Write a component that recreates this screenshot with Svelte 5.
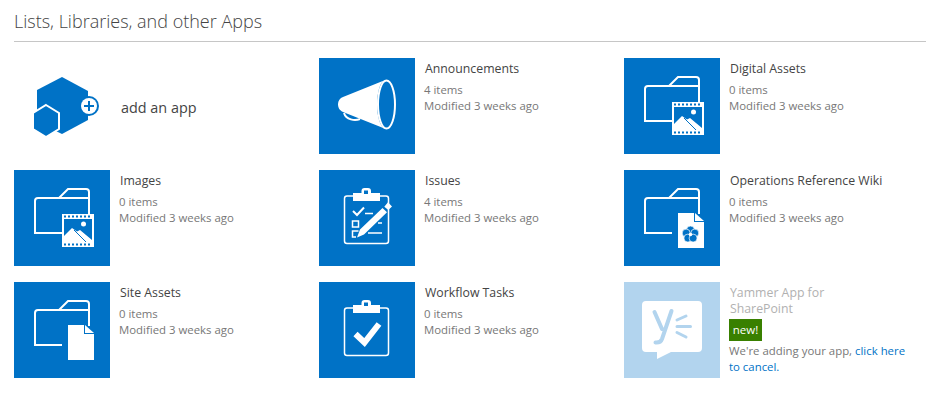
{#snippet folder()}
  <path class="line" d="M48 63H21V31a3 3 0 0 1 3-3H45L54 19H72a3 3 0 0 1 3 3V44M45 28H75" />
{/snippet}

{#snippet media()}
  {@render folder()}
  <path class="fill" fill-rule="evenodd" d="M48 44H80V77H48Z M50 45.500v2h2v-2Zm4 0v2h2v-2Zm4 0v2h2v-2Zm4 0v2h2v-2Zm4 0v2h2v-2Zm4 0v2h2v-2Zm4 0v2h2v-2Z M50 73.500v2h2v-2Zm4 0v2h2v-2Zm4 0v2h2v-2Zm4 0v2h2v-2Zm4 0v2h2v-2Zm4 0v2h2v-2Zm4 0v2h2v-2Z M50 49V72H78V49Z" />
  <circle class="fill" cx="69.500" cy="54" r="2.500" />
  <path class="fill" d="M50 72V66L58 58L63 61.500L66 60L78 70V72Z" />
  <path class="cut" d="M60 60L72 72" />
{/snippet}

{#snippet doc()}
  {@render folder()}
  <path class="fill" d="M54 43H70V52H80V78H54Z M71 43L80 51H71Z" />
{/snippet}

{#snippet clip()}
  <path class="line thin" d="M34 26H28a2.500 2.500 0 0 0-2.500 2.500V71a2.500 2.500 0 0 0 2.500 2.500H67a2.500 2.500 0 0 0 2.500-2.500V28.500A2.500 2.500 0 0 0 67 26H61" />
  <path class="fill" fill-rule="evenodd" d="M34 23H42.500V21a3 3 0 0 1 3-3H49a3 3 0 0 1 3 3V23H61V31H34Z M45 20.500V24H49V20.500Z" />
{/snippet}

<main class="page">
  <h1>Lists, Libraries, and other Apps</h1>
  <div class="grid">
    <div class="app add">
      <svg class="tile plain" viewBox="0 0 96 96" aria-hidden="true">
        <path class="blue" d="M48 19L74 33V62L48 76L23 64V32Z" />
        <path class="blue halo" d="M32 47L45 55V71L32 79L19 71V55Z" />
        <circle class="blue" cx="75" cy="48" r="10" />
        <circle class="fill" cx="75" cy="48" r="8" />
        <path class="plus" d="M70 48H80M75 43V53" />
      </svg>
      <span class="addlabel">add an app</span>
    </div>

    <div class="app">
      <svg class="tile" viewBox="0 0 96 96" aria-hidden="true">
        <path class="fill" d="M65 22.500A9 24 0 0 0 58 46.500A9 24 0 0 0 65.500 70.500L24 54C20 52 19 49 19 46C19 43 21 40 24 39Z" />
        <ellipse class="line" cx="67.500" cy="46.500" rx="8.500" ry="24" />
        <path class="line" d="M25 55C27 62 36 63 41 61" />
      </svg>
      <div class="info"><div class="name">Announcements</div><div class="meta">4 items</div><div class="meta">Modified 3 weeks ago</div></div>
    </div>

    <div class="app">
      <svg class="tile" viewBox="0 0 96 96" aria-hidden="true">{@render media()}</svg>
      <div class="info"><div class="name">Digital Assets</div><div class="meta">0 items</div><div class="meta">Modified 3 weeks ago</div></div>
    </div>

    <div class="app">
      <svg class="tile" viewBox="0 0 96 96" aria-hidden="true">{@render media()}</svg>
      <div class="info"><div class="name">Images</div><div class="meta">0 items</div><div class="meta">Modified 3 weeks ago</div></div>
    </div>

    <div class="app">
      <svg class="tile" viewBox="0 0 96 96" aria-hidden="true">
        {@render clip()}
        <path class="line" d="M34 41L38 45L45 37.500" />
        <path class="line thin" d="M46 43.500H54M59 53H63M49 63H63" />
        <rect class="line thin" x="33.500" y="51" width="6" height="6" />
        <path class="line thin" d="M39.500 61H33.500V67H37" />
        <path class="fill" d="M63.500 38L68 42.300L45 64.500L38 67.500L41 59.500ZM69 32.300L73 36.500L69.300 40L65.300 36.700Z" />
      </svg>
      <div class="info"><div class="name">Issues</div><div class="meta">4 items</div><div class="meta">Modified 3 weeks ago</div></div>
    </div>

    <div class="app">
      <svg class="tile" viewBox="0 0 96 96" aria-hidden="true">
        {@render doc()}
        <g class="petal">
          <circle cx="66.500" cy="60" r="4" />
          <circle cx="62.200" cy="63.100" r="4" />
          <circle cx="70.800" cy="63.100" r="4" />
          <circle cx="63.900" cy="68.100" r="4" />
          <circle cx="69.100" cy="68.100" r="4" />
        </g>
        <circle class="fill" cx="66.500" cy="64.500" r="1.800" />
      </svg>
      <div class="info"><div class="name">Operations Reference Wiki</div><div class="meta">0 items</div><div class="meta">Modified 3 weeks ago</div></div>
    </div>

    <div class="app">
      <svg class="tile" viewBox="0 0 96 96" aria-hidden="true">{@render doc()}</svg>
      <div class="info"><div class="name">Site Assets</div><div class="meta">0 items</div><div class="meta">Modified 3 weeks ago</div></div>
    </div>

    <div class="app">
      <svg class="tile" viewBox="0 0 96 96" aria-hidden="true">
        {@render clip()}
        <path class="check" d="M36.500 52L45.500 60.500L60 42" />
      </svg>
      <div class="info"><div class="name">Workflow Tasks</div><div class="meta">0 items</div><div class="meta">Modified 3 weeks ago</div></div>
    </div>

    <div class="app">
      <svg class="tile pale" viewBox="0 0 96 96" aria-hidden="true">
        <path class="fill" d="M22 19H74a4 4 0 0 1 4 4V66a4 4 0 0 1-4 4H47L33 77V70H22a4 4 0 0 1-4-4V23a4 4 0 0 1 4-4Z" />
        <path class="yam" d="M30.500 30L38 47M47.500 29L38 57Q36.500 61 31.500 60.500" />
        <path class="yam thinner" d="M53 38L62 34M53 44.500H66.500M53 50.500L62 55" />
      </svg>
      <div class="info">
        <div class="name faded">Yammer App for SharePoint</div>
        <div class="badge">new!</div>
        <div class="meta notice">We're adding your app, <a href="#cancel">click here to cancel.</a></div>
      </div>
    </div>
  </div>
</main>

<style>
  :global(body) {
    margin: 0;
    background: #fff;
  }
  .page {
    width: 926px;
    height: 417px;
    box-sizing: border-box;
    padding: 0 0 0 14px;
    font-family: "Open Sans", "Noto Sans", sans-serif;
    overflow: hidden;
  }
  h1 {
    margin: 0;
    height: 41px;
    border-bottom: 1px solid #c6c6c6;
    font-size: 18px;
    font-weight: 300;
    line-height: 42px;
    color: #444;
  }
  .grid {
    display: grid;
    grid-template-columns: repeat(3, 305px);
    grid-auto-rows: 112px;
    padding-top: 16px;
  }
  .app {
    display: flex;
    gap: 9px;
    align-items: flex-start;
    min-width: 0;
  }
  .tile {
    flex: none;
    width: 96px;
    height: 96px;
    background: #0072c6;
  }
  .tile.plain { background: none; }
  .tile.pale { background: #b2d4ee; }
  .fill { fill: #fff; }
  .blue { fill: #0072c6; }
  .petal { fill: #0072c6; stroke: #fff; stroke-width: 0.700; }
  .halo { stroke: #fff; stroke-width: 2; }
  .plus { stroke: #0072c6; stroke-width: 2; fill: none; }
  .line { fill: none; stroke: #fff; stroke-width: 2; }
  .thin { stroke-width: 1.500; }
  .cut { fill: none; stroke: #0072c6; stroke-width: 1; }
  .check { fill: none; stroke: #fff; stroke-width: 6; }
  .yam { fill: none; stroke: #b2d4ee; stroke-width: 4; stroke-linecap: round; }
  .thinner { stroke-width: 3; }
  .add { align-items: center; height: 96px; gap: 11px; }
  .addlabel { font-size: 14.400px; color: #444; line-height: 20px; padding-top: 4px; }
  .info {
    width: 180px;
    padding-top: 3px;
    font-size: 11.400px;
    line-height: 16px;
  }
  .name {
    font-size: 12.300px;
    color: #444;
    padding-left: 1px;
    margin-bottom: 5px;
  }
  .name.faded { color: #b1b1b1; margin-bottom: 2px; max-width: 125px; }
  .meta { color: #777; }
  .badge {
    width: 33px;
    height: 22px;
    line-height: 22px;
    background: #398000;
    color: #fff;
    font-size: 11.500px;
    text-align: center;
  }
  .notice { margin-top: 2px; line-height: 15.500px; }
  a { color: #0072c6; text-decoration: none; }
</style>
